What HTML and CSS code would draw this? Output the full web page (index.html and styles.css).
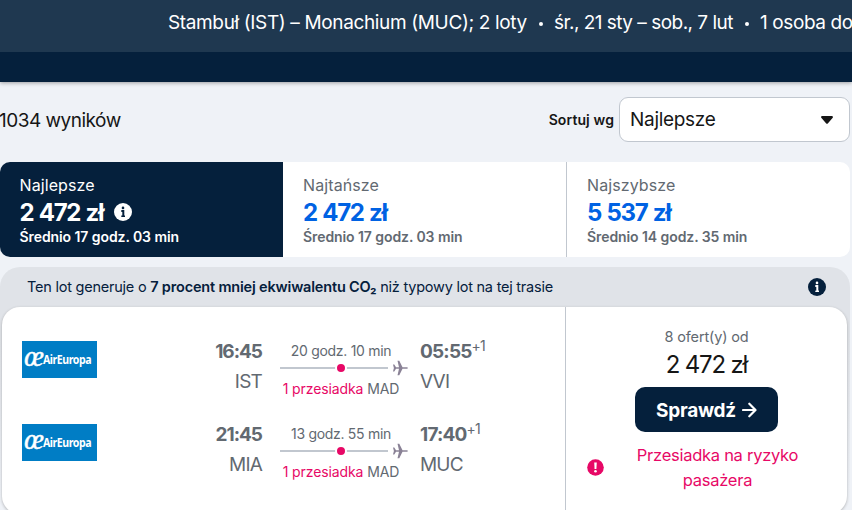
FILE: index.html
```
<!DOCTYPE html>
<html lang="pl">
<head>
    <meta charset="UTF-8">
    <meta name="viewport" content="width=device-width, initial-scale=1.0">
    <title>Stambuł – Monachium</title>
    <link rel="stylesheet" href="styles.css">
</head>
<body>
    <header>
        <div class="search-summary">
            <span class="route">Stambuł (IST) – Monachium (MUC); 2 loty</span>
            <span class="dot"></span>
            <span class="dates">śr., 21 sty – sob., 7 lut</span>
            <span class="dot"></span>
            <span class="people">1 osoba do</span>
        </div>
    </header>

    <main>
        <div class="toolbar">
            <span class="count">1034 wyników</span>
            <span class="sort-label">Sortuj wg</span>
            <div class="select">
                <span>Najlepsze</span>
                <svg width="12" height="8" viewBox="0 0 12 8"><path d="M1.300 0h9.400c1.100 0 1.600 1.300.8 2L7 7.200a1.400 1.400 0 0 1-2 0L.5 2C-.3 1.300.2 0 1.300 0z" fill="#161616"/></svg>
            </div>
        </div>

        <div class="tabs">
            <div class="tab active">
                <span class="tab-name">Najlepsze</span>
                <span class="tab-price">2 472 zł
                    <svg width="18" height="18" viewBox="0 0 18 18"><circle cx="9" cy="9" r="9" fill="#fff"/><circle cx="9" cy="4.900" r="1.300" fill="#05203c"/><path d="M7.300 8h2v5.500" stroke="#05203c" stroke-width="2" fill="none"/><path d="M7.300 13.300h3.700" stroke="#05203c" stroke-width="1.400"/></svg>
                </span>
                <span class="tab-time">Średnio 17 godz. 03 min</span>
            </div>
            <div class="tab">
                <span class="tab-name">Najtańsze</span>
                <span class="tab-price">2 472 zł</span>
                <span class="tab-time">Średnio 17 godz. 03 min</span>
            </div>
            <div class="tab last">
                <span class="tab-name">Najszybsze</span>
                <span class="tab-price">5 537 zł</span>
                <span class="tab-time">Średnio 14 godz. 35 min</span>
            </div>
        </div>

        <div class="eco">
            <div class="eco-bar">
                <p><span>Ten lot generuje o </span><b>7 procent mniej ekwiwalentu CO₂</b><span> niż typowy lot na tej trasie</span></p>
                <svg width="18" height="18" viewBox="0 0 18 18"><circle cx="9" cy="9" r="9" fill="#05203c"/><circle cx="9" cy="4.900" r="1.300" fill="#fff"/><path d="M7.300 8h2v5.500" stroke="#fff" stroke-width="2" fill="none"/><path d="M7.300 13.300h3.700" stroke="#fff" stroke-width="1.400"/></svg>
            </div>

            <div class="ticket">
                <div class="legs">
                    <div class="leg">
                        <div class="logo">
                            <span class="logo-mark">œ</span>
                            <span class="logo-name">AirEuropa</span>
                        </div>
                        <div class="depart">
                            <span class="time">16:45</span>
                            <span class="airport">IST</span>
                        </div>
                        <div class="path">
                            <span class="duration">20 godz. 10 min</span>
                            <div class="line">
                                <span class="track"><i class="stop"></i></span>
                                <svg width="15" height="16" viewBox="0 0 15 16"><path d="M0 4.500h1.300l1.700 2.700h3L4.500.8h1.800L9.500 7.200h4.200c1.500 0 1.500 1.600 0 1.600H9.500l-3.200 6.400H4.500L6 8.800H3l-1.700 2.700H0L.9 8z" fill="#8a8296"/></svg>
                            </div>
                            <span class="stops"><em>1 przesiadka</em> MAD</span>
                        </div>
                        <div class="arrive">
                            <span class="time">05:55<sup>+1</sup></span>
                            <span class="airport">VVI</span>
                        </div>
                    </div>
                    <div class="leg">
                        <div class="logo">
                            <span class="logo-mark">œ</span>
                            <span class="logo-name">AirEuropa</span>
                        </div>
                        <div class="depart">
                            <span class="time">21:45</span>
                            <span class="airport">MIA</span>
                        </div>
                        <div class="path">
                            <span class="duration">13 godz. 55 min</span>
                            <div class="line">
                                <span class="track"><i class="stop"></i></span>
                                <svg width="15" height="16" viewBox="0 0 15 16"><path d="M0 4.500h1.300l1.700 2.700h3L4.500.8h1.800L9.500 7.200h4.200c1.500 0 1.500 1.600 0 1.600H9.500l-3.200 6.400H4.500L6 8.800H3l-1.700 2.700H0L.9 8z" fill="#8a8296"/></svg>
                            </div>
                            <span class="stops"><em>1 przesiadka</em> MAD</span>
                        </div>
                        <div class="arrive">
                            <span class="time">17:40<sup>+1</sup></span>
                            <span class="airport">MUC</span>
                        </div>
                    </div>
                </div>

                <div class="offer">
                    <span class="offer-count">8 ofert(y) od</span>
                    <span class="offer-price">2 472 zł</span>
                    <a class="button">
                        <span>Sprawdź</span>
                        <svg width="15" height="16" viewBox="0 0 15 16"><path d="M1 8h12M7.300 1.700 13.500 8l-6.200 6.300" stroke="#fff" stroke-width="2.200" fill="none" stroke-linecap="round" stroke-linejoin="round"/></svg>
                    </a>
                    <div class="warning">
                        <svg width="17" height="17" viewBox="0 0 17 17"><circle cx="8.500" cy="8.500" r="8.300" fill="#e70866"/><path d="M7.200 3.500h2.600L9.400 10H7.600z" fill="#fff"/><circle cx="8.500" cy="12.300" r="1.300" fill="#fff"/></svg>
                        <p>Przesiadka na ryzyko pasażera</p>
                    </div>
                </div>
            </div>
        </div>
    </main>
</body>
</html>
```
FILE: styles.css
```
/* Base */
* {
    box-sizing: border-box;
}
body {
    margin: 0;
    height: 510px;
    overflow: hidden;
    background-color: #eff2f7;
    color: #161616;
    font-family: Inter, "Liberation Sans", sans-serif;
}
p {
    margin: 0;
}
svg {
    display: block;
    flex: none;
}
/* Header */
header {
    height: 82px;
    background-color: #05203c;
    box-shadow: 0 1px 4px rgba(0, 0, 0, 0.35);
}
.search-summary {
    display: flex;
    align-items: center;
    height: 52px;
    padding: 0 0 7px 168px;
    background-color: #1f3850;
    color: #fff;
    font-size: 19px;
    white-space: nowrap;
    overflow: hidden;
}
.search-summary span {
    flex: none;
}
.route {
    width: 359px;
    letter-spacing: -0.36px;
}
.dates {
    width: 179px;
    letter-spacing: -0.52px;
}
.people {
    letter-spacing: -0.4px;
}
.dot {
    width: 4px;
    height: 4px;
    margin: 2px 11px 0 12px;
    border-radius: 50%;
    background-color: #fff;
}
/* Result count and sorting */
.toolbar {
    display: flex;
    align-items: center;
    height: 45px;
    margin: 15px 2px 20px 0;
}
.count {
    flex: 1;
    margin: 2px 0 0 -1px;
    font-size: 19px;
    letter-spacing: -0.5px;
}
.sort-label {
    margin-right: 5px;
    font-size: 14px;
    font-weight: 600;
    letter-spacing: 0.1px;
}
.select {
    display: flex;
    align-items: center;
    justify-content: space-between;
    width: 231px;
    height: 45px;
    padding: 0 16px 0 10px;
    border: 1px solid #c1c7cf;
    border-radius: 9px;
    background-color: #fff;
    font-size: 19px;
    letter-spacing: -0.3px;
}
/* Tabs */
.tabs {
    display: grid;
    grid-template-columns: 283px 284px 283px;
    width: 850px;
    height: 95px;
    border-radius: 10px;
    background-color: #fff;
    overflow: hidden;
}
.tab {
    display: flex;
    flex-direction: column;
    padding: 12px 0 0 20px;
    border-right: 1px solid #c1c7cf;
    color: #626971;
    white-space: nowrap;
}
.tab.active {
    padding-left: 19.500px;
    border: 0;
    background-color: #05203c;
    color: #fff;
}
.tab.last {
    border: 0;
}
.tab-name {
    font-size: 16px;
    line-height: 22px;
    letter-spacing: 0.1px;
}
.tab-price {
    display: flex;
    align-items: center;
    gap: 11px;
    margin-top: 2px;
    color: #0062e3;
    font-size: 24px;
    font-weight: 700;
    line-height: 29px;
    letter-spacing: -1.300px;
    word-spacing: 1px;
}
.tab-price svg {
    margin-top: -2px;
}
.active .tab-price {
    color: #fff;
}
.tab-time {
    font-size: 14px;
    font-weight: 600;
    line-height: 20px;
    letter-spacing: -0.08px;
}
/* Emissions bar */
.eco {
    width: 850px;
    height: 260px;
    margin-top: 10px;
    border-radius: 20px;
    background: linear-gradient(#e0e3e8 70px, #eff2f7 230px);
}
.eco-bar {
    display: flex;
    align-items: center;
    justify-content: space-between;
    height: 40px;
    padding: 0 24px 0 27px;
    color: #05203c;
    font-size: 14.500px;
    letter-spacing: -0.23px;
    white-space: pre;
}
.eco-bar p {
    margin-top: -1px;
}
.eco-bar b {
    font-weight: 600;
    letter-spacing: -0.18px;
}
/* Ticket */
.ticket {
    display: flex;
    width: 845px;
    height: 207px;
    margin-left: 2px;
    border-radius: 18px;
    background-color: #fff;
    box-shadow: 0 1px 3px rgba(37, 32, 31, 0.3);
}
.legs {
    width: 564px;
    padding: 30px 0 0 20px;
    border-right: 1px solid #c1c7cf;
}
.leg {
    display: flex;
    height: 83px;
    color: #626971;
}
.logo {
    display: flex;
    align-items: center;
    width: 75px;
    height: 37px;
    margin-top: 4px;
    padding-left: 2px;
    background-color: #007dc5;
    color: #fff;
}
.logo-mark {
    width: 21px;
    margin-top: -7px;
    font: italic 30px/30px "Liberation Serif", serif;
    letter-spacing: -1px;
    -webkit-text-stroke: 0.4px #fff;
}
.logo-name {
    margin-top: 1px;
    font: bold 12px/16px "Noto Sans", sans-serif;
    letter-spacing: -0.5px;
    transform: scaleX(0.88);
    transform-origin: left;
}
.depart, .arrive {
    display: flex;
    flex-direction: column;
    white-space: nowrap;
}
.depart {
    width: 165px;
    margin-right: 1px;
    align-items: flex-end;
}
.time {
    height: 30px;
    font-size: 19px;
    font-weight: 700;
    line-height: 30px;
    letter-spacing: -1px;
}
.arrive .time {
    letter-spacing: -0.8px;
}
.time sup {
    font-size: 14px;
    font-weight: 400;
    line-height: 0;
}
.airport {
    font-size: 19px;
    line-height: 30px;
    letter-spacing: -0.8px;
}
.path {
    display: flex;
    flex-direction: column;
    align-items: center;
    width: 128px;
    margin: 0 12px 0 17px;
    font-size: 14px;
    white-space: nowrap;
}
.duration {
    height: 23px;
    margin-left: -6px;
    line-height: 27px;
    letter-spacing: -0.3px;
}
.line {
    display: flex;
    align-items: center;
    justify-content: space-between;
    width: 128px;
    height: 16px;
}
.track {
    display: flex;
    align-items: center;
    width: 108px;
    height: 2px;
    background-color: #c1c7cf;
}
.stop {
    width: 12px;
    height: 12px;
    margin-left: 55px;
    border: 2px solid #fff;
    border-radius: 50%;
    background-color: #e70866;
}
.stops {
    margin-left: -6px;
    line-height: 25px;
    letter-spacing: -0.1px;
}
.stops em {
    color: #e70866;
    font-style: normal;
}
/* Price column */
.offer {
    display: flex;
    flex-direction: column;
    align-items: center;
    flex: 1;
    padding-top: 19px;
}
.offer-count {
    color: #626971;
    font-size: 14.500px;
    line-height: 22px;
    letter-spacing: -0.15px;
}
.offer-price {
    font-size: 24px;
    line-height: 34px;
    letter-spacing: -1.2px;
}
.button {
    display: flex;
    align-items: center;
    justify-content: center;
    gap: 6px;
    width: 143px;
    height: 45px;
    margin: 5px 0 11px;
    border-radius: 10px;
    background-color: #05203c;
    color: #fff;
    font-size: 19px;
    font-weight: 700;
    letter-spacing: -0.25px;
}
.button span {
    margin-top: 2px;
}
.warning {
    display: flex;
    align-items: center;
    width: 240px;
    gap: 24px;
    color: #e70866;
    font-size: 16.500px;
    line-height: 25px;
    letter-spacing: -0.27px;
    text-align: center;
}
.warning svg {
    margin-top: -2px;
}
.warning p {
    width: 180px;
}
```
